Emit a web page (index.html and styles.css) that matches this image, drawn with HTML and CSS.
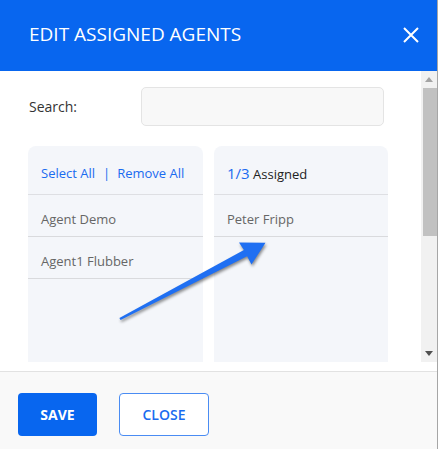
FILE: index.html
```html
<!DOCTYPE html>
<html>
<head>
<meta charset="utf-8">
<link rel="stylesheet" href="styles.css">
</head>
<body>
<div class="modal">
  <div class="header">
    <div class="title">EDIT ASSIGNED AGENTS</div>
    <svg class="close-x" width="16" height="16" viewBox="0 0 16 16"><path d="M1 1 L15 15 M15 1 L1 15" stroke="#fff" stroke-width="2" fill="none"/></svg>
  </div>
  <div class="body">
    <div class="scroll-area">
      <div class="content">
        <div class="search-row">
          <label class="search-label">Search:</label>
          <div class="search-input"></div>
        </div>
        <div class="panels">
          <div class="panel">
            <div class="panel-head"><span class="link">Select All</span><span class="sep">|</span><span class="link">Remove All</span></div>
            <div class="row">Agent Demo</div>
            <div class="row">Agent1 Flubber</div>
          </div>
          <div class="panel">
            <div class="panel-head"><span class="count">1/3</span> <span class="assigned">Assigned</span></div>
            <div class="row">Peter Fripp</div>
          </div>
        </div>
      </div>
      <div class="scrollbar">
        <div class="sb-btn"><svg width="8" height="5" viewBox="0 0 8 5"><path d="M0 5 L4 0 L8 5Z" fill="#a3a3a3"/></svg></div>
        <div class="sb-thumb"></div>
        <div class="sb-space"></div>
        <div class="sb-btn"><svg width="8" height="5" viewBox="0 0 8 5"><path d="M0 0 L8 0 L4 5Z" fill="#505050"/></svg></div>
      </div>
    </div>
  </div>
  <div class="footer">
    <button class="btn btn-save">SAVE</button>
    <button class="btn btn-close">CLOSE</button>
  </div>
  <svg class="arrow" width="438" height="449" viewBox="0 0 438 449">
    <polygon points="119.4,317.9 243.9,250.1 239,242.6 265.5,242.8 251.5,264.5 247.1,256.3 120.6,320.1" fill="#1f6ff2"/>
  </svg>
</div>
</body>
</html>
```
FILE: styles.css
```css
* { box-sizing: border-box; }
html, body { margin: 0; padding: 0; }
body {
  background: #a6a6a6;
  font-family: "Open Sans", "Liberation Sans", sans-serif;
  width: 438px;
  height: 449px;
  overflow: hidden;
}
.modal {
  position: relative;
  width: 437px;
  height: 449px;
  background: #fff;
  display: flex;
  flex-direction: column;
}
.header {
  height: 71px;
  background: #0866ef;
  display: flex;
  align-items: center;
  justify-content: space-between;
  padding: 0 18px 3px 29px;
  flex: none;
}
.title {
  color: #fff;
  font-size: 19px;
  line-height: 26px;
  font-weight: 400;
}
.close-x { display: block; margin-top: 2px; }
.body {
  padding-bottom: 9px;
  flex: none;
}
.scroll-area {
  height: 291px;
  display: flex;
  overflow: hidden;
}
.content {
  flex: 1;
  padding: 16px 32px 0 28px;
}
.search-row {
  display: flex;
  align-items: center;
  height: 39px;
}
.search-label {
  width: 113px;
  padding-left: 1px;
  font-size: 14px;
  color: #333;
}
.search-input {
  width: 243px;
  height: 39px;
  background: #f8f8f8;
  border: 1px solid #e4e4e4;
  border-radius: 5px;
}
.panels {
  margin-top: 20px;
  display: grid;
  grid-template-columns: 175px 174px;
  column-gap: 11px;
}
.panel {
  background: #f4f6fa;
  border-radius: 8px 8px 0 0;
  height: 240px;
}
.panel-head {
  padding: 18px 13px 13px;
  height: 49px;
  line-height: 18px;
  font-size: 13px;
  border-bottom: 1px solid #dedfe3;
  white-space: nowrap;
}
.link { color: #1a6bf0; font-weight: 500; }
.sep { color: #1a6bf0; margin: 0 7px 0 8px; font-weight: 500; }
.count { color: #1a6bf0; font-size: 15px; font-weight: 500; }
.assigned { color: #222; font-weight: 500; }
.row {
  padding: 15px 13px 8px;
  line-height: 18px;
  font-size: 13px;
  color: #666;
  border-bottom: 1px solid #d9dadd;
}
.scrollbar {
  width: 16px;
  flex: none;
  background: #f1f1f1;
  display: flex;
  flex-direction: column;
}
.sb-btn {
  height: 17px;
  display: flex;
  align-items: center;
  justify-content: center;
}
.sb-thumb {
  height: 148px;
  margin-left: 2px;
  background: #c1c1c1;
}
.sb-space { flex: 1; }
.footer {
  flex: 1;
  border-top: 1px solid #e2e2e2;
  background: #f9f9f9;
  padding: 21px 18px 0;
  display: flex;
  align-items: flex-start;
  gap: 22px;
}
.btn {
  font-family: "Open Sans", "Liberation Sans", sans-serif;
  height: 43px;
  border-radius: 4px;
  font-size: 14px;
  cursor: pointer;
}
.btn-save {
  width: 79px;
  background: #0866ef;
  color: #fff;
  border: none;
  font-weight: 700;
}
.btn-close {
  width: 90px;
  background: #fff;
  color: #1a6bf0;
  border: 1px solid #4a8cf3;
  font-weight: 600;
}
.arrow {
  position: absolute;
  left: 0;
  top: 0;
  pointer-events: none;
  filter: drop-shadow(1px 2px 1.5px rgba(0,0,0,0.45));
}
```
